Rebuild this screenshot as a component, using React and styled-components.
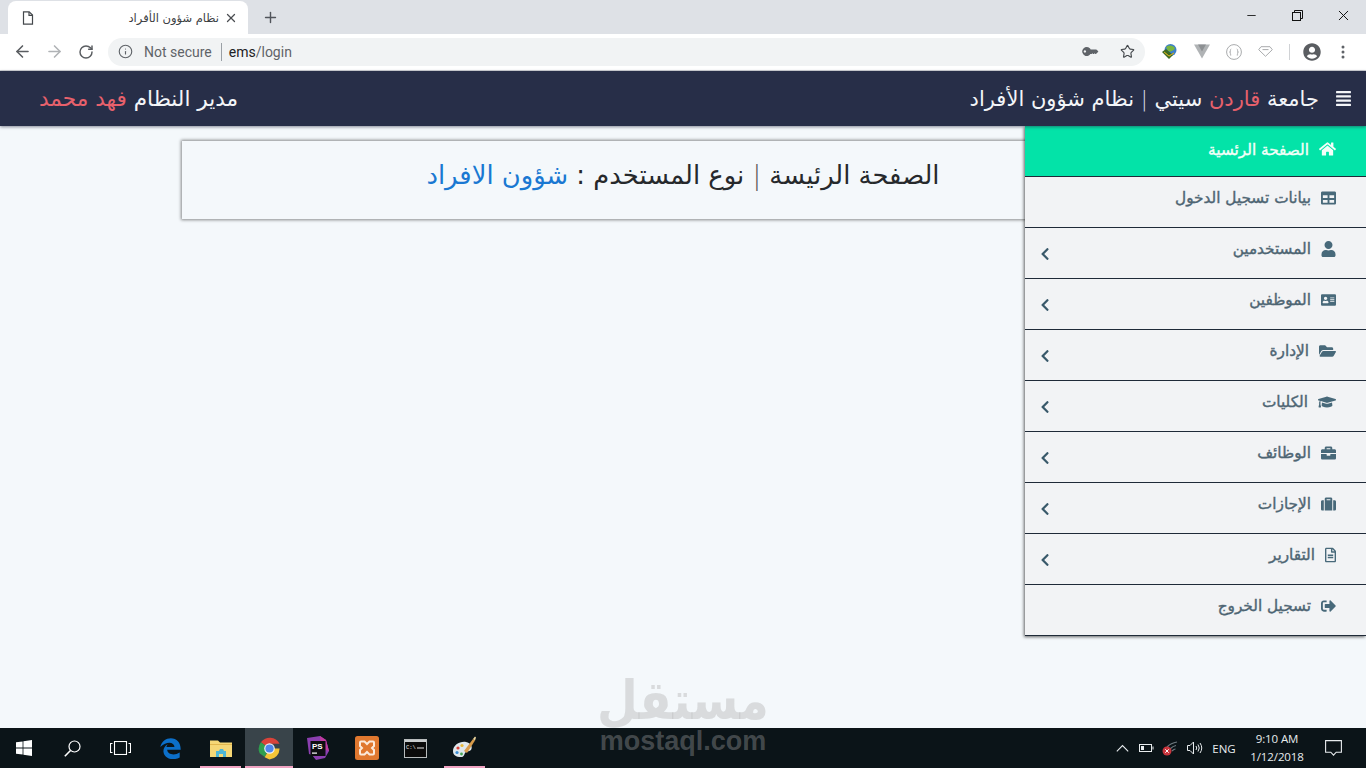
import React from "react";
import styled, { createGlobalStyle } from "styled-components";
import { ArrowLeft, ArrowRight, RotateCw, Info, Star, Plus, X, Minus } from "lucide-react";
import {
  FaAlignJustify,
  FaHome,
  FaTable,
  FaUser,
  FaAddressCard,
  FaFolderOpen,
  FaGraduationCap,
  FaBriefcase,
  FaSuitcase,
  FaRegFileAlt,
  FaSignOutAlt,
  FaChevronLeft,
  FaKey,
  FaUserCircle,
} from "react-icons/fa";

const GlobalStyle = createGlobalStyle`
  html, body { margin: 0; padding: 0; height: 100%; overflow: hidden; }
  body { font-family: "DejaVu Sans", "Noto Sans", sans-serif; background: #f4f8fb; }
  * { box-sizing: border-box; }
`;

const Page = styled.div`
  position: relative;
  width: 1366px;
  height: 768px;
  display: flex;
  flex-direction: column;
  overflow: hidden;
`;

/* browser chrome */
const TabStrip = styled.div`
  height: 34px;
  background: #dee1e6;
  display: flex;
  align-items: flex-end;
  padding-left: 8px;
  flex: none;
`;

const Tab = styled.div`
  width: 240px;
  height: 33px;
  background: #fff;
  border-radius: 8px 8px 0 0;
  display: flex;
  align-items: center;
  padding: 0 10px 0 14px;
  color: #3c4043;
`;

const TabTitle = styled.span`
  flex: 1;
  text-align: right;
  direction: rtl;
  font-size: 11.5px;
  padding-left: 8px;
  padding-right: 5px;
  white-space: nowrap;
  letter-spacing: -0.3px;
`;

const NewTab = styled.div`
  margin-left: 14px;
  height: 33px;
  display: flex;
  align-items: center;
  color: #51555b;
`;

const WindowControls = styled.div`
  margin-left: auto;
  height: 33px;
  display: flex;
  align-items: flex-start;
`;

const WindowButton = styled.div`
  width: 46px;
  height: 28px;
  display: flex;
  align-items: center;
  justify-content: center;
  color: #111;
`;

const Toolbar = styled.div`
  height: 37px;
  background: #fff;
  border-bottom: 1px solid #d4d6d9;
  display: flex;
  align-items: center;
  padding: 0 0 1px 6px;
  flex: none;
`;

const NavGlyph = styled.div`
  width: 32px;
  display: flex;
  justify-content: center;
  color: ${(p) => p.$color || "#5a5d61"};
`;

const Omnibox = styled.div`
  margin-left: 6px;
  width: 1037px;
  height: 28px;
  border-radius: 14px;
  background: #f1f3f4;
  display: flex;
  align-items: center;
  padding: 0 10px 0 10px;
  font-family: "Roboto", sans-serif;
  font-size: 14px;
  color: #5f6368;
`;

const InfoSlot = styled.span`
  display: flex;
  margin-right: 11px;
`;

const Divider = styled.span`
  width: 1px;
  height: 18px;
  background: #9aa0a6;
  margin: 0 7px 0 9px;
`;

const UrlHost = styled.span`
  color: #202124;
`;

const OmniRight = styled.div`
  margin-left: auto;
  display: flex;
  align-items: center;
  gap: 24px;
  color: #5f6368;
`;

const Extensions = styled.div`
  flex: 1;
  display: flex;
  align-items: center;
  padding-left: 16px;
  gap: 16px;
`;

const ExtSep = styled.span`
  width: 1px;
  height: 16px;
  background: #d0d2d5;
  margin-right: -3px;
`;

const MoreDots = styled.svg`
  margin-left: 4px;
`;

/* app header */
const Header = styled.header`
  height: 55px;
  flex: none;
  background: #272e48;
  box-shadow: 0 1px 3px rgba(40, 46, 70, 0.55);
  display: flex;
  direction: rtl;
  align-items: center;
  justify-content: space-between;
  padding: 0 14px 0 39px;
  color: #f3f5f8;
  font-size: 21px;
  position: relative;
  z-index: 2;
`;

const Brand = styled.div`
  display: flex;
  align-items: center;
  gap: 16px;
`;

const UserName = styled.div`
  font-size: 21.6px;
`;

const Red = styled.span`
  color: #e8616c;
`;

const Sep = styled.span`
  color: ${(p) => p.$color || "#d8dbe6"};
  font-weight: 300;
`;

/* main area */
const Main = styled.main`
  flex: 1;
  padding: 15px 182px 0;
  background: #f4f8fb;
`;

const TitleCard = styled.div`
  height: 78px;
  background: #f4f8fb;
  box-shadow: 0 0 3px 1px rgba(0, 0, 0, 0.45);
  direction: rtl;
  display: flex;
  align-items: center;
  justify-content: center;
  padding-bottom: 10px;
  font-size: 25.8px;
  color: #26292c;
`;

const Blue = styled.span`
  color: #1a78d2;
`;

const Sidebar = styled.nav`
  position: absolute;
  top: 126px;
  right: 0;
  width: 341px;
  background: #f2f3f5;
  box-shadow: -1px 1px 3px rgba(0, 0, 0, 0.6);
  z-index: 1;
  direction: rtl;
`;

const MenuRow = styled.div`
  height: 51px;
  border-bottom: 1px solid #1f2a38;
  background: ${(p) => (p.$active ? "#03e3a8" : "#f2f3f5")};
  color: ${(p) => (p.$active ? "#f4fff9" : "#4e6573")};
  display: flex;
  align-items: flex-start;
  padding: ${(p) => (p.$active ? "12px 30px 0 14px" : "10px 30px 0 14px")};
  font-size: 15.3px;
  -webkit-text-stroke: 0.4px currentColor;
  gap: 10px;
`;

const MenuLabel = styled.span`
  line-height: 22px;
  padding-top: ${(p) => (p.$active ? 1 : 0)}px;
`;

const MenuIcon = styled.span`
  width: ${(p) => p.$w}px;
  height: 22px;
  display: flex;
  align-items: center;
  justify-content: center;
  color: ${(p) => (p.$active ? "#f4fff9" : "#48697a")};
  flex: none;

  svg {
    width: ${(p) => p.$w}px;
    height: 16px;
  }
`;

const Chevron = styled.span`
  margin-right: auto;
  margin-top: 9px;
  width: 12px;
  display: flex;
  justify-content: center;
  color: #39596a;
`;

/* windows taskbar */
const Taskbar = styled.footer`
  height: 40px;
  flex: none;
  background: #0b1418;
  display: flex;
  align-items: stretch;
  position: relative;
  z-index: 2;
`;

const TaskSlot = styled.div`
  width: ${(p) => p.$w || 48}px;
  display: flex;
  align-items: center;
  justify-content: center;
  background: ${(p) => (p.$active ? "#39444a" : "transparent")};
  position: relative;

  &::after {
    content: "";
    display: ${(p) => (p.$open ? "block" : "none")};
    position: absolute;
    left: ${(p) => (p.$active ? 0 : 4)}px;
    right: ${(p) => (p.$active ? 0 : 4)}px;
    bottom: 0;
    height: 2px;
    background: #f0a3c2;
  }
`;

const Tray = styled.div`
  margin-left: auto;
  display: flex;
  align-items: center;
  color: #e8ecee;
`;

const TrayItem = styled.div`
  width: ${(p) => p.$w}px;
  display: flex;
  justify-content: center;
  align-items: center;
`;

const Lang = styled.span`
  font-family: "Open Sans", sans-serif;
  font-size: 11.5px;
`;

const Clock = styled.div`
  width: 72px;
  text-align: center;
  font-family: "Open Sans", sans-serif;
  font-size: 11.5px;
  line-height: 18px;
  letter-spacing: -0.1px;
`;

const Watermark = styled.div`
  position: absolute;
  left: 583px;
  top: 677px;
  width: 200px;
  text-align: center;
  color: rgba(170, 170, 170, 0.36);
  z-index: 5;
  pointer-events: none;
`;

const WatermarkAr = styled.div`
  font-size: 47px;
  font-weight: bold;
  line-height: 48px;
  height: 48px;
  transform: scaleY(1.15);
`;

const WatermarkEn = styled.div`
  font-family: "Liberation Sans", sans-serif;
  font-weight: bold;
  font-size: 27px;
  line-height: 24px;
  margin-top: 4px;
`;

const menu = [
  { label: "بيانات تسجيل الدخول", icon: FaTable, w: 15 },
  { label: "المستخدمين", icon: FaUser, w: 15, sub: true },
  { label: "الموظفين", icon: FaAddressCard, w: 15, sub: true },
  { label: "الإدارة", icon: FaFolderOpen, w: 17, sub: true },
  { label: "الكليات", icon: FaGraduationCap, w: 18, sub: true },
  { label: "الوظائف", icon: FaBriefcase, w: 15, sub: true },
  { label: "الإجازات", icon: FaSuitcase, w: 15, sub: true },
  { label: "التقارير", icon: FaRegFileAlt, w: 11, sub: true },
  { label: "تسجيل الخروج", icon: FaSignOutAlt, w: 15 },
];

function FileGlyph() {
  return (
    <svg width="12" height="14" viewBox="0 0 12 14" fill="none" stroke="#44484c" strokeWidth="1.2">
      <path d="M1.5 .8h5.7l3.3 3.3v9.1h-9z" />
      <path d="M7 1v3.3h3.5" />
    </svg>
  );
}

function RestoreGlyph() {
  return (
    <svg width="11" height="11" viewBox="0 0 11 11" fill="none" stroke="#111" strokeWidth="1">
      <rect x=".5" y="2.5" width="8" height="8" />
      <path d="M2.5 2.5v-2h8v8h-2" />
    </svg>
  );
}

function IdmGlyph() {
  return (
    <svg width="17" height="17" viewBox="0 0 17 17">
      <circle cx="9.5" cy="7" r="6" fill="#3d7fc9" />
      <path d="M5 4c3-2 6-2 9 1-1 3-5 4-7 3z" fill="#79b63f" />
      <path d="M1 9l4-3 7 6-4 4z" fill="#3c6b23" />
      <path d="M3 9l5 4 5-3-5 3z" fill="#e6c62f" stroke="#c9a81f" />
    </svg>
  );
}

function VueGlyph() {
  return (
    <svg width="16" height="15" viewBox="0 0 16 15">
      <path d="M0 .5h16L8 14.5z" fill="#b0b3b5" />
      <path d="M4 .5h8L8 7.5z" fill="#8d9093" />
    </svg>
  );
}

function BracesGlyph() {
  return (
    <svg width="16" height="16" viewBox="0 0 16 16" fill="none" stroke="#a9abad" strokeWidth="1">
      <circle cx="8" cy="8" r="7.4" />
      <path d="M5.3 5Q4 5 4.4 7T3.4 8q1.4 0 1 2t.9 1M10.7 5q1.3 0 .9 2t1 1q-1.4 0-1 2t-.9 1" strokeWidth=".8" />
    </svg>
  );
}

function GemGlyph() {
  return (
    <svg width="15" height="11" viewBox="0 0 15 11" fill="none" stroke="#a9abad" strokeWidth="1">
      <path d="M3 .7h9l2.3 3L7.5 10.3.7 3.7z" />
      <path d="M4.5 3.6h6" />
    </svg>
  );
}

function WinLogo() {
  return (
    <svg width="16" height="16" viewBox="0 0 16 16" fill="#fff">
      <path d="M0 2.3l6.6-.9v6.2H0zM7.4 1.3L16 0v7.6H7.4zM0 8.4h6.6v6.2L0 13.7zM7.4 8.4H16V16l-8.6-1.3z" />
    </svg>
  );
}

function SearchGlyph() {
  return (
    <svg width="17" height="17" viewBox="0 0 17 17" fill="none" stroke="#fff" strokeWidth="1.2">
      <circle cx="10.5" cy="6.5" r="5.5" />
      <path d="M6.5 10.5L.8 16.2" strokeWidth="1.6" />
    </svg>
  );
}

function TaskViewGlyph() {
  return (
    <svg width="21" height="14" viewBox="0 0 21 14" fill="none" stroke="#fff" strokeWidth="1.1">
      <rect x="4.5" y=".5" width="12" height="13" />
      <path d="M2.5 2.5H.5v9h2M18.5 2.5h2v9h-2" />
    </svg>
  );
}

function EdgeGlyph() {
  return (
    <svg width="21" height="21" viewBox="0 0 21 21">
      <path
        d="M.3 9C1.6 3.3 6 .3 10.8.3c6 0 10 4.2 9.9 11.5H7.2c.3 4.6 7 6.2 12.5 2.8v5c-6.3 3.2-15.2 1.6-16.2-5.6C3.1 11 4.6 8.1 7.7 6.3c-.7.9-1.1 1.9-1.3 2.8h8c.4-4.2-6.6-7.2-14.1-.1z"
        fill="#0c6fc9"
      />
    </svg>
  );
}

function ExplorerGlyph() {
  return (
    <svg width="22" height="19" viewBox="0 0 22 19">
      <path d="M0 1.5h8l2 2h12V18H0z" fill="#f6d776" />
      <path d="M0 5h22v1H0z" fill="#e2b64d" />
      <path d="M6 18v-6h3l1-2h3l1 2h2v6h-3v-3H9v3z" fill="#4fb6d6" />
    </svg>
  );
}

function ChromeGlyph() {
  return (
    <svg width="23" height="23" viewBox="0 0 24 24">
      <path d="M12 12L3 5.5A11.5 11.5 0 0 1 22.5 7H12z" fill="#d9433a" />
      <path d="M12 12l-5 8.9L1.7 17A11.5 11.5 0 0 1 3 5.5z" fill="#2f9e4f" />
      <path d="M12 12h10.5A11.5 11.5 0 0 1 12 23.5L7 21z" fill="#f5c537" />
      <circle cx="12" cy="12" r="5.5" fill="#f1f3f4" />
      <circle cx="12" cy="12" r="4.3" fill="#4f86ec" />
    </svg>
  );
}

function PhpStormGlyph() {
  return (
    <svg width="24" height="24" viewBox="0 0 24 24">
      <path d="M1 2l13-2 6 4 3 11-4 7-9 2-4-5-3-1z" fill="#8b3fb0" />
      <path d="M14 0l6 4 3 11-8-3z" fill="#c13aa0" />
      <rect x="4.5" y="5" width="15" height="15" fill="#0e0e12" />
      <text x="6" y="13" fontSize="8" fontWeight="bold" fill="#fff" fontFamily="Liberation Sans">PS</text>
      <rect x="6" y="16.5" width="5" height="1.2" fill="#fff" />
    </svg>
  );
}

function XamppGlyph() {
  return (
    <svg width="24" height="24" viewBox="0 0 24 24">
      <rect width="24" height="24" rx="2.5" fill="#e0782f" />
      <path
        d="M6 5.5h3.5L12 8l2.5-2.5H18q1 0 1 1V10l-2 2 2 2v3.5q0 1-1 1h-3.5L12 16l-2.5 2.5H6q-1 0-1-1V14l2-2-2-2V6.5q0-1 1-1z"
        fill="none"
        stroke="#fbeadb"
        strokeWidth="2"
      />
    </svg>
  );
}

function CmdGlyph() {
  return (
    <svg width="23" height="19" viewBox="0 0 23 19">
      <rect x=".5" y=".5" width="22" height="18" fill="#0b0b0b" stroke="#b8bcbd" />
      <rect x="1" y="1" width="21" height="2" fill="#c9cdce" />
      <text x="2" y="9.5" fontSize="5.5" fill="#e8e8e8" fontFamily="Liberation Mono">C:\</text>
      <rect x="13" y="8.5" width="7" height="1" fill="#e8e8e8" />
    </svg>
  );
}

function PaintGlyph() {
  return (
    <svg width="25" height="24" viewBox="0 0 25 24">
      <path d="M1 15C1 9 8 5 14 6c5 1 7 5 5 8-2 2-5 1-6 3s-1 4-4 4c-5 0-8-2-8-6z" fill="#dfe7ec" />
      <circle cx="6" cy="12" r="1.6" fill="#d9433a" />
      <circle cx="10" cy="9.5" r="1.6" fill="#e8b93a" />
      <circle cx="5" cy="16.5" r="1.6" fill="#3c8fd6" />
      <circle cx="9.5" cy="18" r="1.4" fill="#47a655" />
      <path d="M12 15L21 3l2 1.5L15 17z" fill="#d89b4a" />
      <path d="M21 3l2-2.5 1 1-1 3z" fill="#f0d9a0" />
    </svg>
  );
}

function BatteryGlyph() {
  return (
    <svg width="15" height="10" viewBox="0 0 15 10" fill="none" stroke="#e8ecee">
      <rect x=".5" y="1.5" width="12" height="7" />
      <rect x="2" y="3" width="3" height="4" fill="#e8ecee" stroke="none" />
      <path d="M14 3.5v3" />
    </svg>
  );
}

function NetworkGlyph() {
  return (
    <svg width="17" height="15" viewBox="0 0 17 15" fill="none">
      <path d="M5 6q4-4 10-5M8 8q3-3 6-3.5M10 10q2-2 3.5-2" stroke="#6f7a80" strokeWidth="1.2" />
      <circle cx="5" cy="10" r="4.5" fill="#c8343c" />
      <path d="M3.3 8.3l3.4 3.4M6.700 8.300l-3.400 3.400" stroke="#fff" strokeWidth="1" />
    </svg>
  );
}

function VolumeGlyph() {
  return (
    <svg width="16" height="14" viewBox="0 0 16 14" fill="none" stroke="#e8ecee" strokeWidth="1">
      <path d="M.5 4.5h2.5L6.500 1v12L3 9.500H.5z" />
      <path d="M9 5q1.500 2 0 4M11 3.500q2.500 3.500 0 7M13 2q3.500 5 0 10" />
    </svg>
  );
}

function NotifyGlyph() {
  return (
    <svg width="17" height="16" viewBox="0 0 17 16" fill="none" stroke="#e8ecee" strokeWidth="1.1">
      <path d="M.6.6h15.800v11.600h-5.200l-2.700 2.900-2.700-2.900H.6z" />
    </svg>
  );
}

export default function App() {
  return (
    <Page>
      <GlobalStyle />
      <TabStrip>
        <Tab>
          <FileGlyph />
          <TabTitle>نظام شؤون الأفراد</TabTitle>
          <X size={14} strokeWidth={2.2} color="#4a4d51" />
        </Tab>
        <NewTab>
          <Plus size={17} strokeWidth={2} />
        </NewTab>
        <WindowControls>
          <WindowButton><Minus size={13} strokeWidth={1.6} /></WindowButton>
          <WindowButton><RestoreGlyph /></WindowButton>
          <WindowButton><X size={17} strokeWidth={1.4} /></WindowButton>
        </WindowControls>
      </TabStrip>

      <Toolbar>
        <NavGlyph><ArrowLeft size={19} strokeWidth={2} /></NavGlyph>
        <NavGlyph $color="#b0b3b6"><ArrowRight size={19} strokeWidth={2} /></NavGlyph>
        <NavGlyph><RotateCw size={16} strokeWidth={2.2} /></NavGlyph>
        <Omnibox>
          <InfoSlot><Info size={15} strokeWidth={1.8} /></InfoSlot>
          Not secure
          <Divider />
          <UrlHost>ems</UrlHost>/login
          <OmniRight>
            <FaKey size={13} style={{ transform: "scaleX(-1) rotate(45deg)" }} />
            <Star size={15} strokeWidth={1.8} color="#44484c" />
          </OmniRight>
        </Omnibox>
        <Extensions>
          <IdmGlyph />
          <VueGlyph />
          <BracesGlyph />
          <GemGlyph />
          <ExtSep />
          <FaUserCircle size={18} color="#5a5d61" />
          <MoreDots width="4" height="14" viewBox="0 0 4 14" fill="#5f6368">
            <circle cx="2" cy="2" r="1.5" />
            <circle cx="2" cy="7" r="1.5" />
            <circle cx="2" cy="12" r="1.5" />
          </MoreDots>
        </Extensions>
      </Toolbar>

      <Header>
        <Brand>
          <FaAlignJustify size={17} />
          <span>
            جامعة <Red>قاردن</Red> سيتي <Sep>|</Sep> نظام شؤون الأفراد
          </span>
        </Brand>
        <UserName>
          مدير النظام <Red>فهد محمد</Red>
        </UserName>
      </Header>

      <Main>
        <TitleCard>
          <span>
            الصفحة الرئيسة <Sep $color="#555">|</Sep> نوع المستخدم : <Blue>شؤون الافراد</Blue>
          </span>
        </TitleCard>
      </Main>

      <Sidebar>
        <MenuRow $active>
          <MenuIcon $w={17} $active><FaHome /></MenuIcon>
          <MenuLabel $active>الصفحة الرئسية</MenuLabel>
        </MenuRow>
        {menu.map((item) => (
          <MenuRow key={item.label}>
            <MenuIcon $w={item.w}><item.icon /></MenuIcon>
            <MenuLabel>{item.label}</MenuLabel>
            {item.sub && (
              <Chevron><FaChevronLeft size={14} /></Chevron>
            )}
          </MenuRow>
        ))}
      </Sidebar>

      <Taskbar>
        <TaskSlot><WinLogo /></TaskSlot>
        <TaskSlot><SearchGlyph /></TaskSlot>
        <TaskSlot><TaskViewGlyph /></TaskSlot>
        <TaskSlot $w={52}><EdgeGlyph /></TaskSlot>
        <TaskSlot $w={49} $open><ExplorerGlyph /></TaskSlot>
        <TaskSlot $active $open><ChromeGlyph /></TaskSlot>
        <TaskSlot $w={50}><PhpStormGlyph /></TaskSlot>
        <TaskSlot><XamppGlyph /></TaskSlot>
        <TaskSlot $w={49}><CmdGlyph /></TaskSlot>
        <TaskSlot $w={49} $open><PaintGlyph /></TaskSlot>
        <Tray>
          <TrayItem $w={24}>
            <svg width="13" height="8" viewBox="0 0 13 8" fill="none" stroke="#e8ecee" strokeWidth="1.1">
              <path d="M.8 7.3L6.5 1.5l5.7 5.8" />
            </svg>
          </TrayItem>
          <TrayItem $w={25}><BatteryGlyph /></TrayItem>
          <TrayItem $w={23}><NetworkGlyph /></TrayItem>
          <TrayItem $w={25}><VolumeGlyph /></TrayItem>
          <TrayItem $w={34}><Lang>ENG</Lang></TrayItem>
          <Clock>
            <div>9:10 AM</div>
            <div>1/12/2018</div>
          </Clock>
          <TrayItem $w={40}><NotifyGlyph /></TrayItem>
          <TrayItem $w={13} />
        </Tray>
      </Taskbar>

      <Watermark>
        <WatermarkAr>مستقل</WatermarkAr>
        <WatermarkEn>mostaql.com</WatermarkEn>
      </Watermark>
    </Page>
  );
}
